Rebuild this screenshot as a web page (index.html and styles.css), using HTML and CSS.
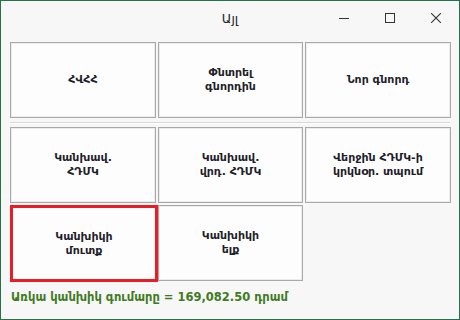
FILE: index.html
```html
<!DOCTYPE html>
<html lang="hy">
<head>
    <meta charset="UTF-8">
    <title>Այլ</title>
    <link rel="stylesheet" href="styles.css">
</head>
<body>
    <div class="window">
        <div class="titlebar">
            <span></span>
            <span class="title">Այլ</span>
            <div class="caption">
                <span class="cap-btn">
                    <svg width="10" height="10" viewBox="0 0 10 10"><path d="M0 5.5H10" stroke="#333" stroke-width="1"/></svg>
                </span>
                <span class="cap-btn">
                    <svg width="10" height="10" viewBox="0 0 10 10"><rect x="0.5" y="0.5" width="9" height="9" fill="none" stroke="#333" stroke-width="1"/></svg>
                </span>
                <span class="cap-btn">
                    <svg width="10" height="10" viewBox="0 0 10 10"><path d="M0 0L10 10M10 0L0 10" stroke="#333" stroke-width="1.1"/></svg>
                </span>
            </div>
        </div>

        <div class="content">
            <div class="grid">
                <button class="tile">ՀՎՀՀ</button>
                <button class="tile">Փնտրել<br>գնորդին</button>
                <button class="tile">Նոր գնորդ</button>
            </div>
            <div class="separator"></div>
            <div class="grid">
                <button class="tile">Կանխավ.<br>ՀԴՄԿ</button>
                <button class="tile">Կանխավ.<br>վրդ. ՀԴՄԿ</button>
                <button class="tile">Վերջին ՀԴՄԿ-ի<br>կրկնօր. տպում</button>
                <button class="tile tile-active">Կանխիկի<br>մուտք</button>
                <button class="tile">Կանխիկի<br>ելք</button>
            </div>
            <p class="balance">Առկա կանխիկ գումարը = 169,082.50 դրամ</p>
        </div>
    </div>
</body>
</html>
```

FILE: styles.css
```css
* {
    box-sizing: border-box;
}
body {
    margin: 0;
    font-family: "DejaVu Sans", "Noto Sans", sans-serif;
    background: #f7f7f7;
}
.window {
    width: 460px;
    height: 320px;
    border: 1px solid #22744a;
    background: #f7f7f7;
}
.titlebar {
    height: 33px;
    display: grid;
    grid-template-columns: 1fr auto 1fr;
    align-items: center;
}
.title {
    font-size: 12.5px;
    color: #222;
    padding-top: 2px;
}
.caption {
    display: flex;
    justify-content: flex-end;
}
.cap-btn {
    width: 46px;
    height: 33px;
    display: flex;
    align-items: center;
    justify-content: center;
}
.cap-btn svg {
    margin-top: 1px;
}
.content {
    padding: 8px 9px 0;
}
.grid {
    display: grid;
    grid-template-columns: 146px 145px 146px;
    grid-auto-rows: 76px;
    gap: 2px;
}
.tile {
    font-family: "DejaVu Sans", "Noto Sans", sans-serif;
    font-size: 11px;
    font-weight: bold;
    line-height: 14px;
    color: #1e1e2a;
    background: #fdfdfd;
    border: 1px solid #a9a9a9;
    box-shadow: inset 0 0 0 1px #ececec;
    padding: 0;
    text-align: center;
}
.tile-active {
    width: calc(100% + 2px);
    height: calc(100% + 1px);
    border: 3px solid #ec1c24;
    box-shadow: none;
}
.separator {
    height: 2px;
    margin: 4px 0 3px;
    border-top: 1px solid #d8d8d8;
    border-bottom: 1px solid #ffffff;
}
.balance {
    margin: 8px 0 0 1px;
    font-size: 11.5px;
    line-height: 16px;
    font-weight: bold;
    color: #3f7a22;
}
```
